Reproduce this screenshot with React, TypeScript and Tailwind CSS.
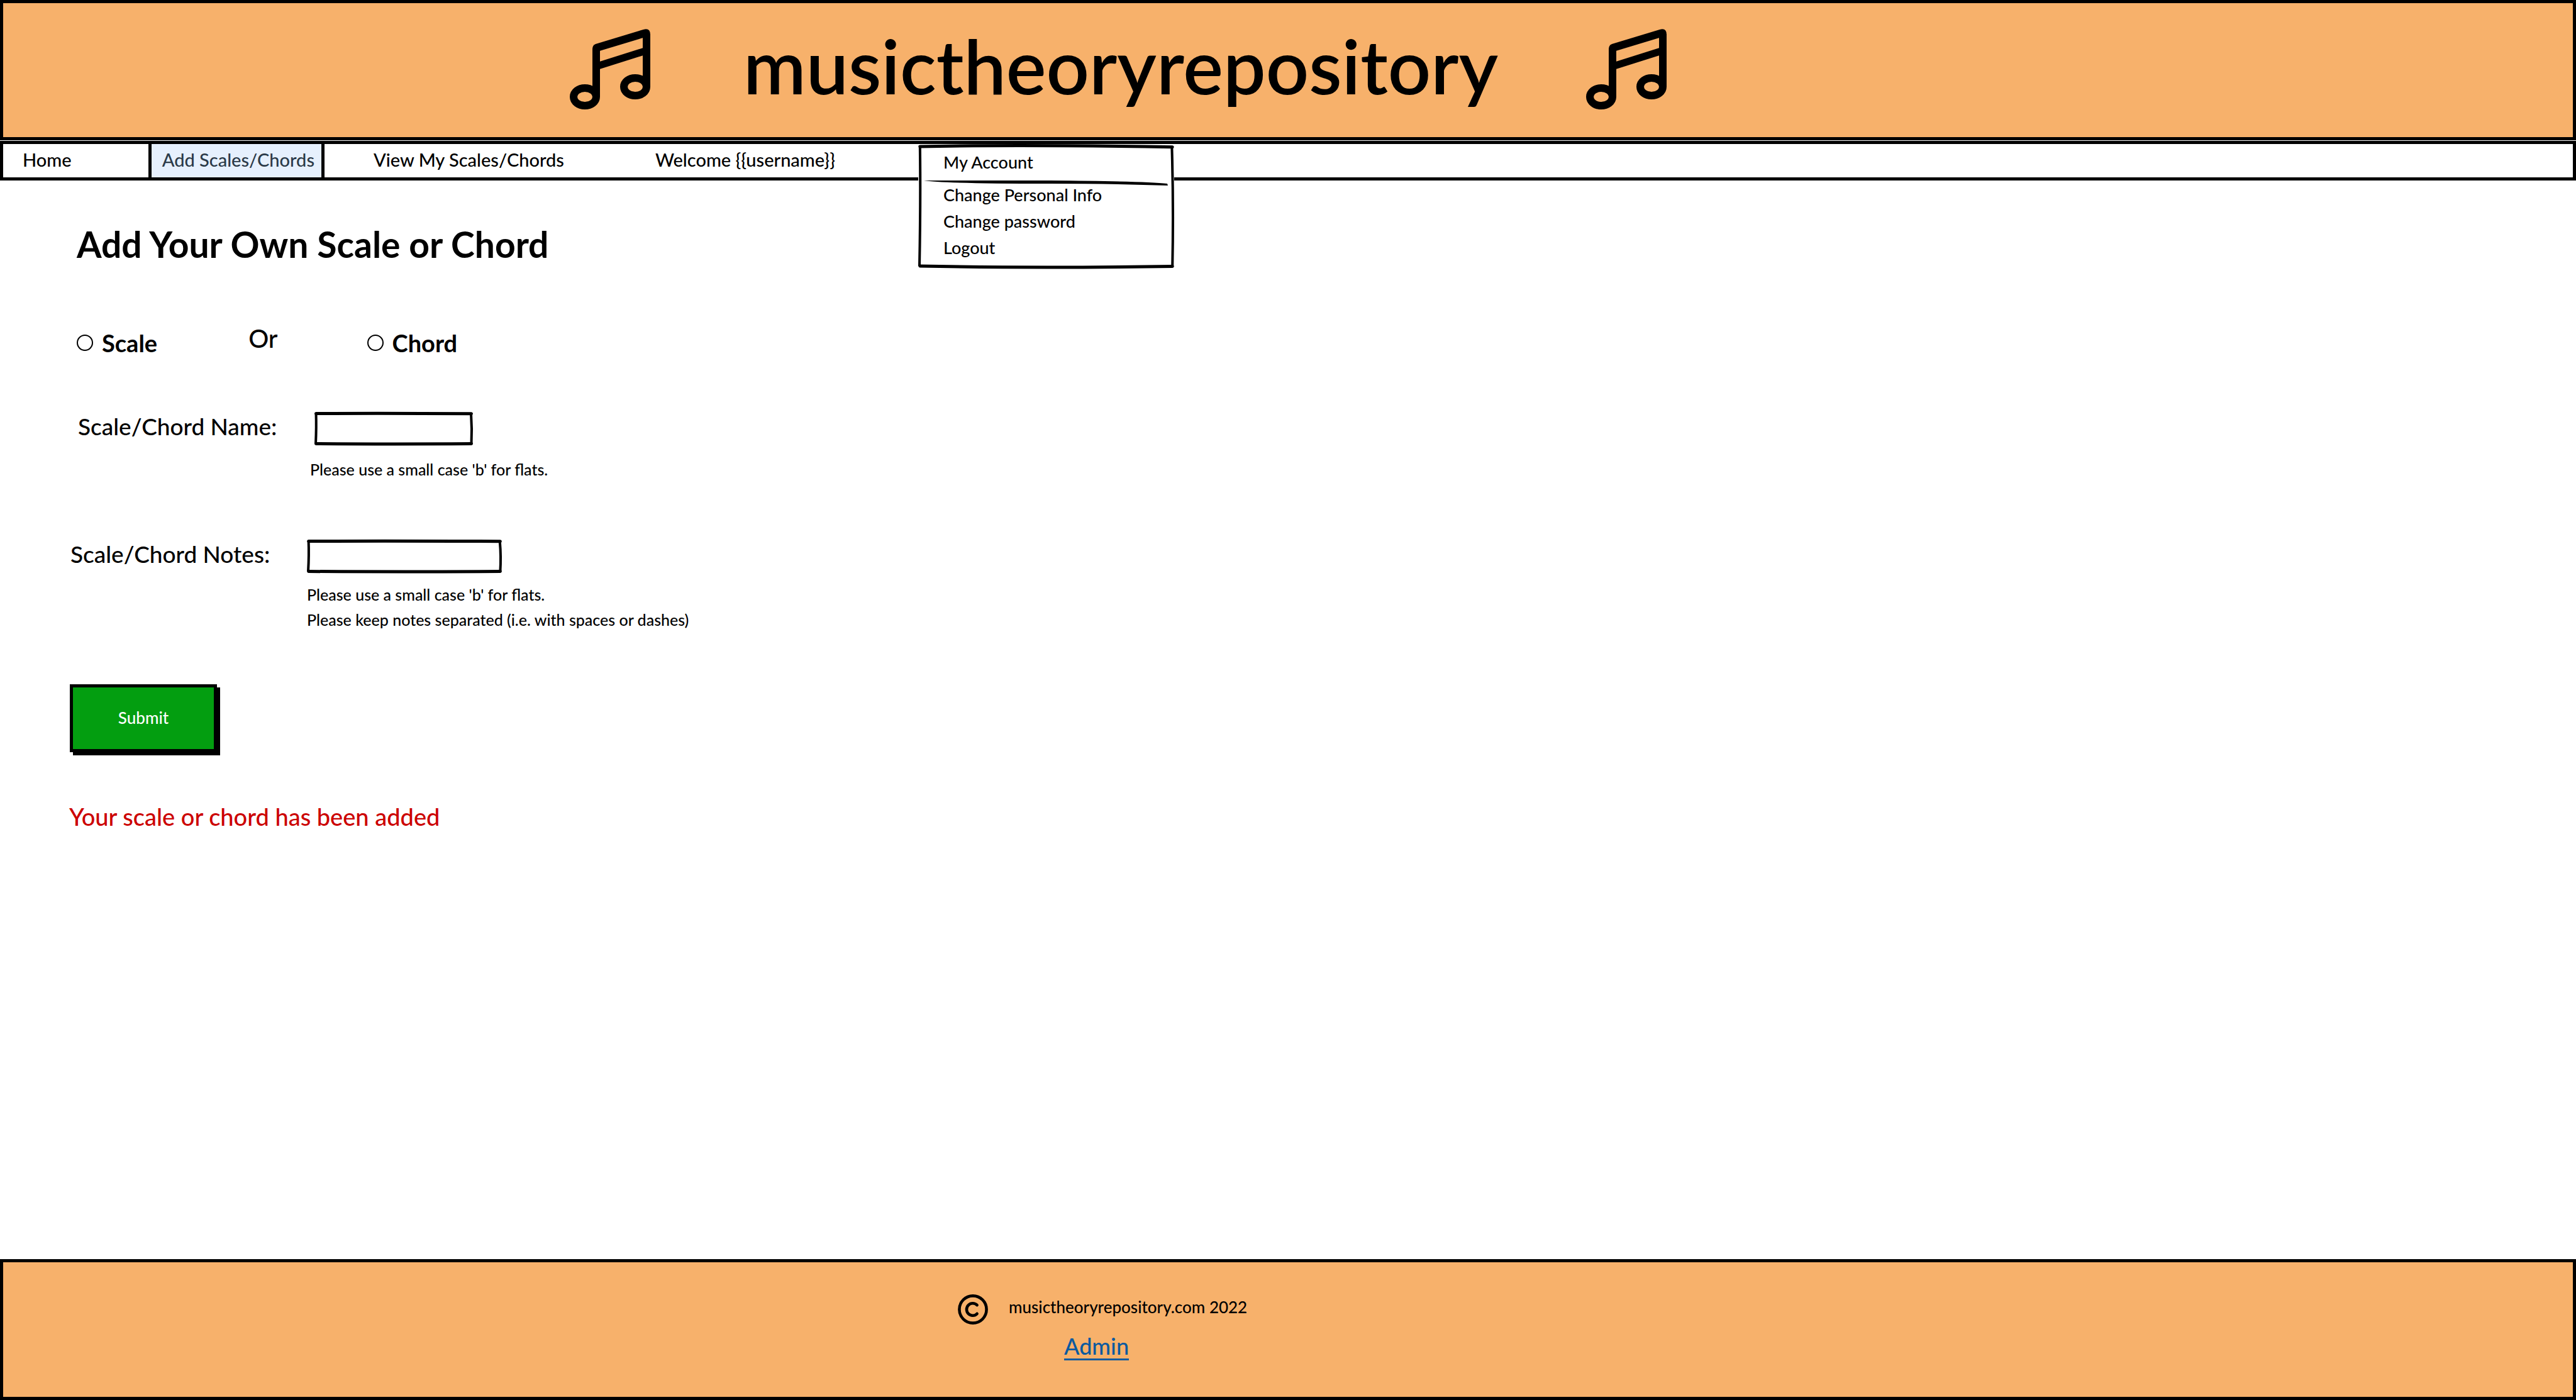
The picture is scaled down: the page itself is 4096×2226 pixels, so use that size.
import React from "react";

function MusicNotes() {
  return (
    <svg viewBox="0 0 128 128" className="size-32 shrink-0" fill="none" stroke="black" strokeWidth="12" aria-hidden="true">
      <ellipse cx="24" cy="108" rx="18" ry="14" />
      <ellipse cx="104" cy="92" rx="18" ry="14" />
      <path d="M42 108V31" />
      <path d="M122 92V8" />
      <path fill="black" stroke="none" d="M36 32Q36 26 41 24L117 1Q128-2 128 9L120 13L44 36Z" />
      <path fill="black" stroke="none" d="M44 53L120 29V41L44 65Z" />
    </svg>
  );
}

function CopyrightMark() {
  return (
    <svg viewBox="0 0 48 48" className="size-12 shrink-0" fill="none" stroke="black" strokeWidth="4.6" strokeLinecap="round" role="img" aria-label="Copyright">
      <circle cx="24" cy="24" r="21.6" />
      <path d="M30.6 17.2A9.7 9.7 0 1 0 30.6 30.8" />
    </svg>
  );
}

/* Hand-drawn outline laid over the edges of its positioned parent. */
function SketchFrame() {
  return (
    <svg
      viewBox="0 0 100 100"
      preserveAspectRatio="none"
      className="pointer-events-none absolute inset-[2px] h-[calc(100%-4px)] w-[calc(100%-4px)] overflow-visible"
      fill="none"
      stroke="black"
      strokeWidth="5"
      aria-hidden="true"
    >
      <path vectorEffect="non-scaling-stroke" strokeLinecap="round" d="M0.2 1Q40 -0.6 99.8 1.4" />
      <path vectorEffect="non-scaling-stroke" strokeLinecap="round" d="M0.2 99Q45 100.8 99.8 99.2" />
      <path vectorEffect="non-scaling-stroke" strokeWidth="4" d="M0.2 0Q0.5 45 0 99" />
      <path vectorEffect="non-scaling-stroke" strokeWidth="4" d="M99.6 2Q100.3 50 99.8 100" />
    </svg>
  );
}

function SketchInput({ id, width }: { id: string; width: string }) {
  return (
    <div className={"relative h-[53px] " + width}>
      <input id={id} type="text" className="h-full w-full bg-white px-3 text-[29px] outline-none" />
      <SketchFrame />
    </div>
  );
}

function Choice({ value, label }: { value: string; label: string }) {
  return (
    <label className="flex items-center gap-[14px] text-[38px] leading-[44px] font-bold">
      <input
        type="radio"
        name="kind"
        value={value}
        className="size-[26px] shrink-0 appearance-none rounded-full border-2 border-black bg-white checked:bg-black"
      />
      {label}
    </label>
  );
}

export default function App() {
  return (
    <div className="flex min-h-screen flex-col bg-white font-['Lato',sans-serif] text-[29px] leading-[36px] font-medium text-black">
      <header className="flex h-[223px] items-center border-[5px] border-black bg-[#f7b16b] pb-1 pl-[901px]">
        <MusicNotes />
        <h1 className="ml-[148px] w-[1196px] pb-3 text-[120px] leading-[140px] font-semibold whitespace-nowrap">musictheoryrepository</h1>
        <div className="ml-[144px]">
          <MusicNotes />
        </div>
      </header>

      <nav className="relative mt-px flex h-[63px] items-stretch border-[5px] border-black bg-white">
        <a href="#home" className="flex w-[231px] items-center pb-1 pl-[31px]">Home</a>
        <a href="#add" className="flex w-[280px] items-center justify-end border-x-[5px] border-black bg-[#e6f0fd] pr-[11px] pb-1 whitespace-nowrap text-[#2b3a48]">
          Add Scales/Chords
        </a>
        <a href="#view" className="flex w-[448px] items-center pb-1 pl-[78px] whitespace-nowrap">View My Scales/Chords</a>
        <span className="flex items-center pb-1 pl-[78px] whitespace-nowrap">Welcome {"{{username}}"}</span>

        <div className="absolute top-0 left-[1455px] z-10 h-[198px] w-[407px] bg-white pt-[11px]">
          <SketchFrame />
          <button type="button" className="block pl-10 text-left text-[27px] leading-[36px]">My Account</button>
          <svg viewBox="0 0 388 8" className="mt-[11px] ml-[9px] block h-2 w-[388px]" aria-hidden="true">
            <path d="M0 0Q60 0 200 0Q350 1 387 5L388 8Q300 5 200 5Q30 5 0 0Z" fill="black" />
          </svg>
          <ul className="-mt-1.5 pl-10 text-[27px] leading-[42px]">
            <li><a href="#info">Change Personal Info</a></li>
            <li><a href="#password">Change password</a></li>
            <li><a href="#logout">Logout</a></li>
          </ul>
        </div>
      </nav>

      <main className="flex-1 pl-[110px]">
        <h2 className="mt-[66px] pl-3 text-[57px] leading-[70px] font-bold">Add Your Own Scale or Chord</h2>

        <form onSubmit={(event) => event.preventDefault()}>
          <div role="radiogroup" aria-label="Kind" className="mt-[100px] flex h-[44px] items-center pl-3">
            <Choice value="scale" label="Scale" />
            <span className="mr-[142px] ml-[145px] pb-[14px] text-[40px] leading-[48px]">Or</span>
            <Choice value="chord" label="Chord" />
          </div>

          <div className="mt-[88px] flex pl-[14px]">
            <label htmlFor="scale-name" className="w-[369px] text-[37px] leading-[46px]">Scale/Chord Name:</label>
            <div>
              <div className="pl-[7px]">
                <SketchInput id="scale-name" width="w-[252px]" />
              </div>
              <p className="mt-[20px] text-[25px] leading-[36px]">Please use a small case 'b' for flats.</p>
            </div>
          </div>

          <div className="mt-[94px] flex pl-[2px]">
            <label htmlFor="scale-notes" className="w-[376px] text-[37px] leading-[46px]">Scale/Chord Notes:</label>
            <div>
              <SketchInput id="scale-notes" width="w-[310px]" />
              <p className="mt-[14px] text-[25px] leading-[40px]">Please use a small case 'b' for flats.</p>
              <p className="text-[25px] leading-[40px]">Please keep notes separated (i.e. with spaces or dashes)</p>
            </div>
          </div>

          <button
            type="submit"
            className="mt-[83px] ml-px block h-[108px] w-[234px] border-[5px] border-black bg-[#039e10] pb-0.5 text-[26px] text-white shadow-[5px_5px_0_0_black]"
          >
            Submit
          </button>
        </form>

        <p role="status" className="mt-[79px] text-[38px] leading-[46px] text-[#cc0000]">Your scale or chord has been added</p>
      </main>

      <footer className="flex h-[224px] flex-col border-[5px] border-black bg-[#f7b16b] pt-[51px] pl-[1518px]">
        <div className="flex items-center gap-[33px]">
          <CopyrightMark />
          <span className="pb-2 text-[26px]">musictheoryrepository.com 2022</span>
        </div>
        <a href="#admin" className="mt-[14px] ml-[169px] self-start border-b-[3px] border-[#0b5a9f] text-[36px] leading-[40px] text-[#0b5a9f]">Admin</a>
      </footer>
    </div>
  );
}
